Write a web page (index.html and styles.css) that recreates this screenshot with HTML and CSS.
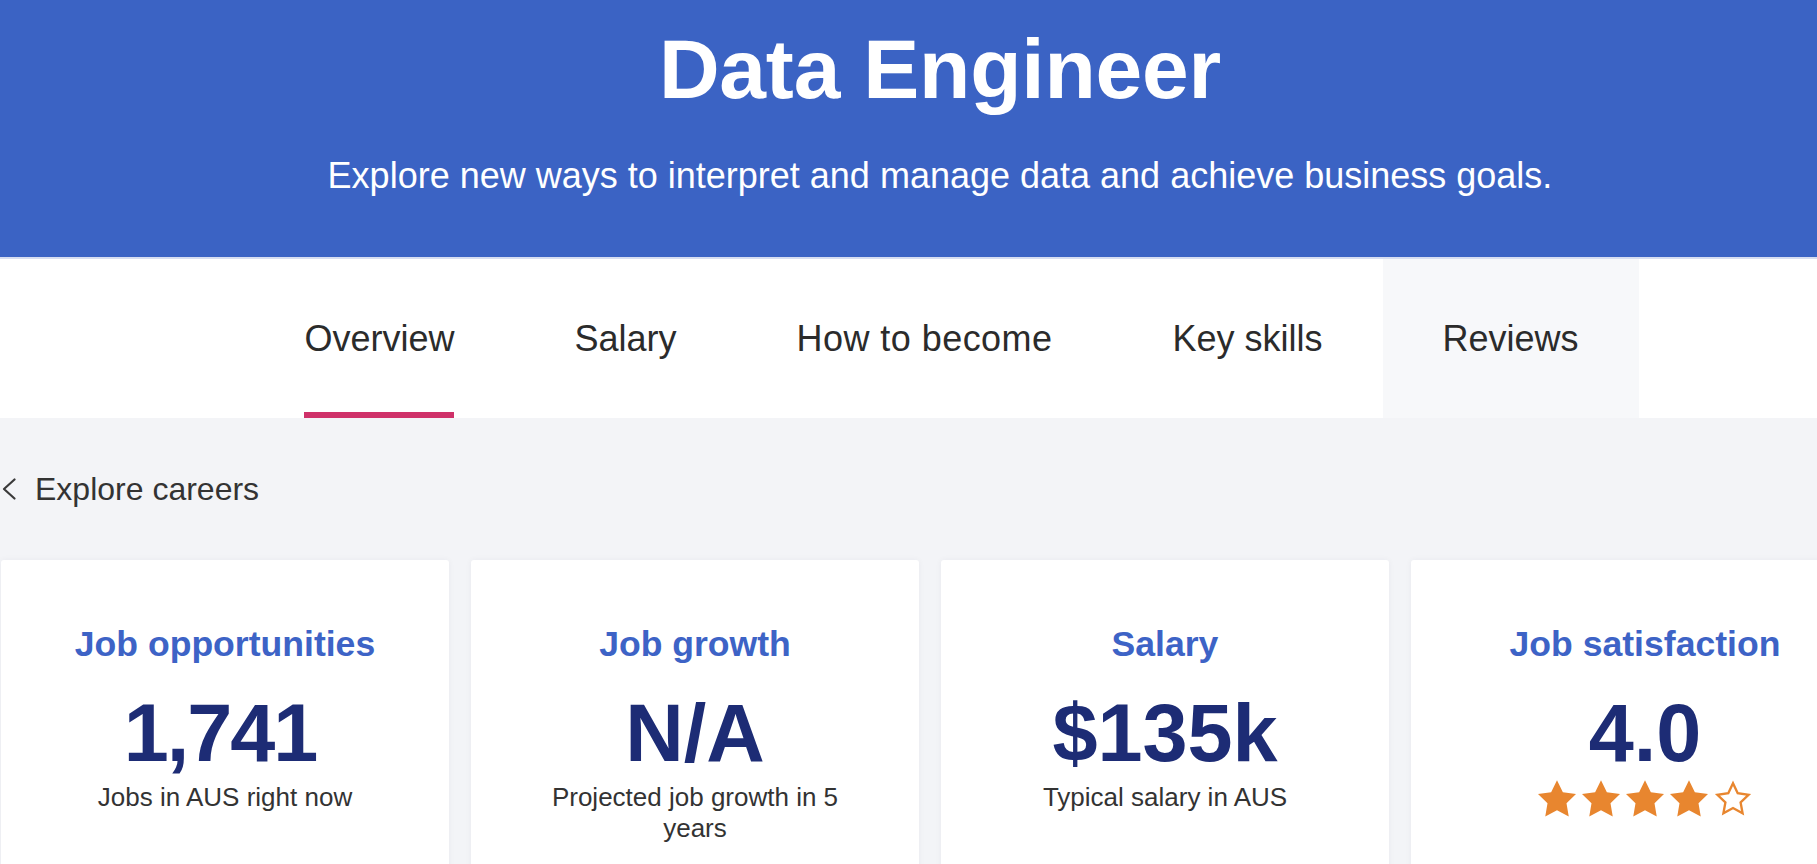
FILE: index.html
```html
<!DOCTYPE html>
<html lang="en">
<head>
<meta charset="utf-8">
<title>Data Engineer</title>
<link rel="stylesheet" href="styles.css">
</head>
<body>
<div class="page">
  <header class="hero">
    <h1 class="hero-title">Data Engineer</h1>
    <p class="hero-sub">Explore new ways to interpret and manage data and achieve business goals.</p>
  </header>

  <nav class="tabs">
    <a class="tab tab-active"><span class="tab-label">Overview</span><span class="tab-bar"></span></a>
    <a class="tab"><span class="tab-label">Salary</span><span class="tab-bar"></span></a>
    <a class="tab"><span class="tab-label tab-label-loose">How to become</span><span class="tab-bar"></span></a>
    <a class="tab"><span class="tab-label">Key skills</span><span class="tab-bar"></span></a>
    <a class="tab tab-hover"><span class="tab-label">Reviews</span><span class="tab-bar"></span></a>
  </nav>

  <main class="main">
    <a class="back">
      <svg class="back-icon" width="14" height="22" viewBox="0 0 14 22"><polyline points="12.5,1.5 2,11 12.5,20.5" fill="none" stroke="#3a3a3a" stroke-width="2.2" stroke-linecap="round" stroke-linejoin="round"/></svg>
      <span class="back-text">Explore careers</span>
    </a>

    <section class="cards">
      <div class="card">
        <h2 class="card-title">Job opportunities</h2>
        <div class="card-value card-value-tight">1,741</div>
        <p class="card-note">Jobs in AUS right now</p>
      </div>
      <div class="card">
        <h2 class="card-title">Job growth</h2>
        <div class="card-value">N/A</div>
        <p class="card-note">Projected job growth in 5 years</p>
      </div>
      <div class="card">
        <h2 class="card-title">Salary</h2>
        <div class="card-value">$135k</div>
        <p class="card-note">Typical salary in AUS</p>
      </div>
      <div class="card">
        <h2 class="card-title">Job satisfaction</h2>
        <div class="card-value">4.0</div>
        <div class="stars">
          <svg class="star" viewBox="2 2 20 19.2"><polygon points="12,2 15.09,8.26 22,9.27 17,14.14 18.18,21.02 12,17.77 5.82,21.02 7,14.14 2,9.27 8.91,8.26" fill="#e8862f"/></svg>
          <svg class="star" viewBox="2 2 20 19.2"><polygon points="12,2 15.09,8.26 22,9.27 17,14.14 18.18,21.02 12,17.77 5.82,21.02 7,14.14 2,9.27 8.91,8.26" fill="#e8862f"/></svg>
          <svg class="star" viewBox="2 2 20 19.2"><polygon points="12,2 15.09,8.26 22,9.27 17,14.14 18.18,21.02 12,17.77 5.82,21.02 7,14.14 2,9.27 8.91,8.26" fill="#e8862f"/></svg>
          <svg class="star" viewBox="2 2 20 19.2"><polygon points="12,2 15.09,8.26 22,9.27 17,14.14 18.18,21.02 12,17.77 5.82,21.02 7,14.14 2,9.27 8.91,8.26" fill="#e8862f"/></svg>
          <svg class="star" viewBox="1.5 1.5 21 20.2"><polygon points="12,3.2 14.6,8.7 20.6,9.6 16.2,13.8 17.3,19.8 12,16.9 6.7,19.8 7.8,13.8 3.4,9.6 9.4,8.7" fill="#ffffff" stroke="#e8862f" stroke-width="1.3" stroke-linejoin="miter"/></svg>
        </div>
      </div>
    </section>
  </main>
</div>
</body>
</html>
```

FILE: styles.css
```css
* {
  box-sizing: border-box;
}

html, body {
  margin: 0;
  padding: 0;
}

body {
  overflow: hidden;
  background: #f3f4f7;
  font-family: "Liberation Sans", Arial, Helvetica, sans-serif;
}

.page {
  width: 1880px;
}

/* Hero */
.hero {
  height: 259px;
  padding-top: 27px;
  background: #3b63c4;
  border-bottom: 2px solid #d7def1;
  text-align: center;
  color: #ffffff;
}

.hero-title {
  margin: 0;
  font-size: 84px;
  line-height: 1;
  font-weight: 700;
  letter-spacing: -0.2px;
}

.hero-sub {
  margin: 47px 0 0;
  font-size: 36px;
  line-height: 1;
  font-weight: 400;
}

/* Tabs */
.tabs {
  height: 159px;
  padding-left: 3px;
  background: #ffffff;
  display: flex;
  justify-content: center;
}

.tab {
  padding: 62px 60px 0;
  display: flex;
  flex-direction: column;
  align-items: stretch;
  justify-content: space-between;
  color: #2b2b2b;
  text-decoration: none;
}

.tab-hover {
  background: #f7f8fa;
}

.tab-label {
  font-size: 36px;
  line-height: 1;
  white-space: nowrap;
}

.tab-label-loose {
  letter-spacing: 0.45px;
}

.tab-bar {
  height: 6px;
}

.tab-active .tab-bar {
  background: #cf3169;
}

/* Main */
.main {
  padding-top: 55px;
}

.back {
  display: flex;
  align-items: center;
  gap: 19px;
  padding-left: 2px;
  color: #333333;
  text-decoration: none;
}

.back-icon {
  display: block;
}

.back-text {
  font-size: 32px;
  line-height: 1;
}

.cards {
  margin-top: 55px;
  margin-left: 1px;
  display: grid;
  grid-template-columns: 448px 448px 448px 468px;
  column-gap: 22px;
}

.card {
  min-height: 340px;
  padding: 67px 56px 0;
  background: #ffffff;
  border-radius: 3px;
  box-shadow: 0 0 6px rgba(30, 40, 80, 0.05);
  text-align: center;
}

.card-title {
  margin: 0;
  font-size: 35.6px;
  line-height: 1;
  font-weight: 700;
  color: #3d63c6;
}

.card-value {
  margin-top: 30px;
  font-size: 81px;
  line-height: 1;
  font-weight: 700;
  color: #1d2c75;
}

.card-value-tight {
  letter-spacing: -2px;
  text-indent: -10px;
}

.card-note {
  margin: 8px 0 0;
  font-size: 26px;
  line-height: 31px;
  color: #333333;
}

.stars {
  margin-top: 6px;
  display: flex;
  justify-content: center;
  gap: 6px;
}

.star {
  display: block;
  width: 38px;
  height: 37px;
}
```
